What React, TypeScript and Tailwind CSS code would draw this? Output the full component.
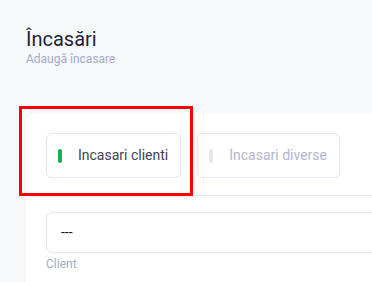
import React from "react";

export default function App() {
  return (
    <div
      className="relative w-[372px] h-[282px] overflow-hidden bg-[#f7f8fa]"
      style={{ fontFamily: "Roboto, 'Liberation Sans', sans-serif" }}
    >
      <div className="pl-[26px] pt-[27px]">
        <h1 className="text-[20px] leading-[24px] text-[#1e2235] font-normal">Încasări</h1>
        <p className="text-[12px] leading-[16px] text-[#a6abc6]">Adaugă încasare</p>
      </div>

      <div className="ml-[26px] mt-[46px] bg-white rounded-tl-[10px] h-[200px]">
        <div className="pt-[20px] pb-[17px] pl-[20px] border-b border-[#e6e7f0] flex gap-4">
          <button className="flex items-center h-[45px] pl-[11px] pr-[12px] border border-[#e6e7f0] rounded-[6px] bg-white">
            <span className="w-[4px] h-[14px] rounded-full bg-[#1ab055]" />
            <span className="ml-4 text-[14px] text-[#3f4254]">Incasari clienti</span>
          </button>
          <button className="flex items-center h-[45px] pl-[11px] pr-[12px] border border-[#e6e7f0] rounded-[6px] bg-white">
            <span className="w-[4px] h-[14px] rounded-full bg-[#e4e6ef]" />
            <span className="ml-4 text-[14px] text-[#b3b6d0]">Incasari diverse</span>
          </button>
        </div>
        <div className="pt-4 pl-[20px]">
          <div className="h-[41px] w-[400px] border border-[#e4e5ef] rounded-[7px] flex items-center pl-[14px] text-[14px] text-[#222]">
            ---
          </div>
          <div className="mt-[3px] text-[12px] leading-[16px] text-[#a6abc6]">Client</div>
        </div>
      </div>

      <div className="absolute left-[19px] top-[106px] w-[174px] h-[90px] border-[3px] border-[#ff0000]" />
    </div>
  );
}
